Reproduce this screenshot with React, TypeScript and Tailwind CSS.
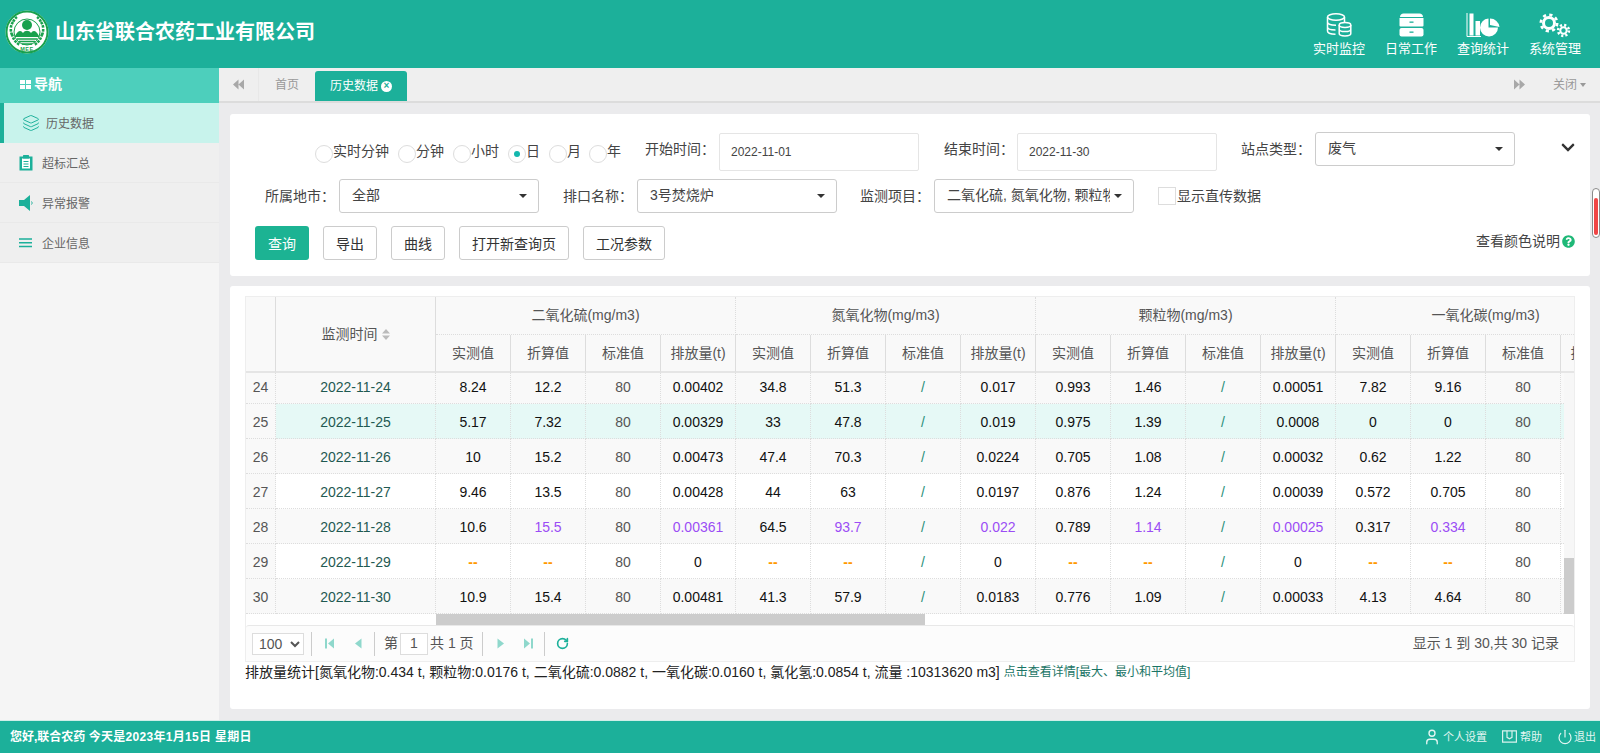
import React from "react";
import { Layers, User, Power, RotateCw } from "lucide-react";
import { FaChevronDown, FaQuestionCircle } from "react-icons/fa";

const rows: string[][] = [
  ["24","2022-11-24","8.24","12.2","80","0.00402","34.8","51.3","/","0.017","0.993","1.46","/","0.00051","7.82","9.16","80",""],
  ["25","2022-11-25","5.17","7.32","80","0.00329","33","47.8","/","0.019","0.975","1.39","/","0.0008","0","0","80",""],
  ["26","2022-11-26","10","15.2","80","0.00473","47.4","70.3","/","0.0224","0.705","1.08","/","0.00032","0.62","1.22","80",""],
  ["27","2022-11-27","9.46","13.5","80","0.00428","44","63","/","0.0197","0.876","1.24","/","0.00039","0.572","0.705","80",""],
  ["28","2022-11-28","10.6","p15.5","80","p0.00361","64.5","p93.7","/","p0.022","0.789","p1.14","/","p0.00025","0.317","p0.334","80",""],
  ["29","2022-11-29","--","--","80","0","--","--","/","0","--","--","/","0","--","--","80",""],
  ["30","2022-11-30","10.9","15.4","80","0.00481","41.3","57.9","/","0.0183","0.776","1.09","/","0.00033","4.13","4.64","80",""],
];
const groups = ["二氧化硫(mg/m3)", "氮氧化物(mg/m3)", "颗粒物(mg/m3)", "一氧化碳(mg/m3)"];
const subs = ["实测值", "折算值", "标准值", "排放量(t)"];

function Cols() {
  return (
    <colgroup>
      <col className="w-[30px]" />
      <col className="w-[160px]" />
      {Array.from({ length: 16 }).map((_, i) => (
        <col key={i} className="w-[75px]" />
      ))}
    </colgroup>
  );
}

function cellClass(v: string) {
  if (v.startsWith("p")) return "text-[#9b4df5]";
  if (v === "--") return "font-bold text-[#ff9900]";
  if (v === "/") return "text-[#2a8f7a]";
  if (v === "80") return "text-[#555]";
  return "text-[#111]";
}

function DoubleArrow({ right }: { right?: boolean }) {
  return (
    <svg width="11" height="11" viewBox="0 0 11 11" className={right ? "rotate-180" : ""}>
      <path d="M5.500 0.500v10L0 5.500zM11 0.500v10L5.500 5.500z" fill="#a8a8a8" />
    </svg>
  );
}

function Radio({ label, w, checked }: { label: string; w: string; checked?: boolean }) {
  return (
    <div className={`flex items-center ${w} shrink-0`}>
      <span className="mt-[3px] flex h-[18px] w-[18px] shrink-0 items-center justify-center rounded-full border border-[#ddd] bg-white">
        {checked && <span className="h-[6px] w-[6px] rounded-full bg-[#14b8ae]" />}
      </span>
      <span className="-mt-[2px] text-[14px] leading-[20px] text-[#444]">{label}</span>
    </div>
  );
}

function Select({ text, w = "w-[200px]" }: { text: string; w?: string }) {
  return (
    <div className={`flex h-[34px] ${w} shrink-0 items-center rounded-[3px] border border-[#ccc] bg-white pl-[12px] pr-[11px]`}>
      <span className="-mt-[2px] flex-1 overflow-hidden whitespace-nowrap text-[14px] text-[#444]">{text}</span>
      <span className="ml-[4px] h-0 w-0 shrink-0 border-x-[4px] border-t-[4px] border-x-transparent border-t-[#333]" />
    </div>
  );
}

function Label({ text, w }: { text: string; w: string }) {
  return <span className={`${w} shrink-0 whitespace-nowrap text-[14px] text-[#444]`}>{text}</span>;
}

function DateInput({ value }: { value: string }) {
  return (
    <input
      readOnly
      value={value}
      className="h-[38px] w-[200px] shrink-0 rounded-[2px] border border-[#e5e5e5] bg-white pl-[11px] text-[12px] text-[#444] outline-none"
    />
  );
}

function Btn({ text, w }: { text: string; w: string }) {
  return (
    <button className={`h-[34px] ${w} shrink-0 rounded-[3px] border border-[#ccc] bg-white pt-[2px] text-[14px] text-[#333]`}>
      {text}
    </button>
  );
}

function Logo() {
  return (
    <svg width="44" height="44" viewBox="0 0 44 44" className="shrink-0">
      <circle cx="22" cy="22" r="21.500" fill="#fff" />
      <circle cx="22" cy="22" r="20.500" fill="none" stroke="#19a14d" strokeWidth="2" />
      <circle cx="22" cy="22" r="13" fill="#fff" stroke="#19a14d" strokeWidth="1" />
      <path
        d="M7 24c1 5 4 9 8 11M5.800 19c0 3 .6 5 1.800 7M37 24c-1 5-4 9-8 11M38.200 19c0 3-.6 5-1.800 7M8 12c-1.500 2-2 4-2.200 6M36 12c1.500 2 2 4 2.200 6M12 7c-1.500 1-3 3-4 5M32 7c1.500 1 3 3 4 5"
        fill="none"
        stroke="#19a14d"
        strokeWidth="2.600"
        strokeDasharray="2.500 1"
      />
      <circle cx="22" cy="15" r="5" fill="#19a14d" />
      <path d="M10 26c3-6 6-6 8-3 2-3 6-3 8 0 2-3 5-3 8 3v1H10z" fill="#19a14d" />
      <path d="M12 29h20M14 31.500h16M17 34h10" stroke="#19a14d" strokeWidth="1.300" />
      <text x="22" y="41" textAnchor="middle" fontSize="5.500" fontWeight="700" fill="#19a14d" letterSpacing="0.500">
        MEE
      </text>
    </svg>
  );
}

function DbIcon() {
  return (
    <svg width="26" height="24" viewBox="0 0 26 24" fill="none" stroke="#fff" strokeWidth="1.500">
      <ellipse cx="10" cy="4" rx="8.500" ry="3.200" />
      <path d="M1.500 4v14c0 2 3.500 3.200 8 3.200M18.500 4v5M1.500 9c0 2 3.500 3.200 8.500 3.200M1.500 14c0 2 3.500 3 8 3" />
      <ellipse cx="19" cy="12" rx="5.800" ry="2.400" />
      <path d="M13.200 12v8.500c0 1.400 2.600 2.400 5.800 2.400s5.800-1 5.800-2.400V12M13.200 16.200c0 1.400 2.600 2.400 5.800 2.400s5.800-1 5.800-2.400" />
    </svg>
  );
}

function DrawerIcon() {
  return (
    <svg width="25" height="24" viewBox="0 0 25 24">
      <path d="M4.500 0.500h16c2 0 3.500 1.500 3.500 3.500H1c0-2 1.500-3.500 3.500-3.500z" fill="#fff" />
      <path d="M0.500 5h24v7.500a1 1 0 0 1-1 1h-22a1 1 0 0 1-1-1z" fill="#fff" />
      <rect x="0.500" y="15" width="24" height="8.500" rx="2" fill="#fff" />
      <rect x="10.500" y="8.500" width="4" height="1.300" fill="#1cb09a" />
      <rect x="10.500" y="18.500" width="4" height="1.300" fill="#1cb09a" />
    </svg>
  );
}

function ChartIcon() {
  return (
    <svg width="34" height="24" viewBox="0 0 34 24">
      <path d="M1 0v23.500h14" fill="none" stroke="#fff" strokeWidth="1" />
      <rect x="3.500" y="0.500" width="4" height="22" fill="#fff" />
      <rect x="9.500" y="8" width="4.500" height="14.500" fill="#fff" />
      <path d="M24 12V5.500a9.500 9.500 0 0 1 9.500 8.500z" fill="#fff" />
      <path d="M23 7a9 9 0 1 0 9.500 9H23z" fill="#fff" transform="translate(-0.500 -1.500)" />
    </svg>
  );
}

function Gear({ cx, cy, r, w }: { cx: number; cy: number; r: number; w: number }) {
  const outer = r + w / 2 + 1.200;
  const c = 2 * Math.PI * outer;
  return (
    <g fill="none" stroke="#fff">
      <circle cx={cx} cy={cy} r={r} strokeWidth={w} />
      <circle cx={cx} cy={cy} r={outer} strokeWidth={2.600} strokeDasharray={`${c / 16} ${c / 16}`} />
    </g>
  );
}

function GearsIcon() {
  return (
    <svg width="32" height="25" viewBox="0 0 32 25">
      <Gear cx={10} cy={10} r={5.500} w={3} />
      <Gear cx={24.500} cy={17.500} r={3.200} w={2} />
    </svg>
  );
}

function ClipIcon() {
  return (
    <svg width="14" height="16" viewBox="0 0 14 16">
      <rect x="0.500" y="1.500" width="13" height="14" fill="#1cb09a" />
      <rect x="3" y="3.500" width="8" height="10" fill="#fff" />
      <rect x="4" y="0" width="6" height="3.500" rx="0.500" fill="#1cb09a" />
      <path d="M4.500 6.500h5M4.500 9h5M4.500 11.500h5" stroke="#1cb09a" strokeWidth="1" />
    </svg>
  );
}

function SpeakerIcon() {
  return (
    <svg width="15" height="16" viewBox="0 0 15 16">
      <path d="M0 5h5l6-5v16l-6-5H0z" fill="#1cb09a" />
      <path d="M12.500 6.500c.8.800.8 2.200 0 3" fill="none" stroke="#1cb09a" strokeWidth="1" />
    </svg>
  );
}

function MenuIcon() {
  return (
    <svg width="13" height="10" viewBox="0 0 13 10">
      <path d="M0 1h13M0 4.800h13M0 8.600h13" stroke="#1cb09a" strokeWidth="1.500" />
    </svg>
  );
}

function BookIcon() {
  return (
    <svg width="15" height="14" viewBox="0 0 15 14" fill="none" stroke="#d7f2ed" strokeWidth="1.200" className="shrink-0">
      <path d="M0.600 0.800h13.800v11.400H0.600z" />
      <path d="M5 0.800v6.500l2.500 1.500 2.500-1.500V0.800" />
    </svg>
  );
}

function PageArrow({ dir, bar, cls }: { dir: "l" | "r"; bar?: boolean; cls: string }) {
  return (
    <svg width="9" height="11" viewBox="0 0 9 11" className={`shrink-0 ${cls} ${dir === "r" ? "rotate-180" : ""}`}>
      {bar && <rect x="0" y="0.500" width="2" height="10" fill="#8fd8cc" />}
      <path d={bar ? "M9 0.500v10L3 5.500z" : "M7.500 0.500v10L1 5.500z"} fill="#8fd8cc" />
    </svg>
  );
}

function Sep({ cls }: { cls: string }) {
  return <div className={`h-[24px] w-px shrink-0 bg-[#ccc] ${cls}`} />;
}

function TopItem({ icon, text }: { icon: React.ReactNode; text: string }) {
  return (
    <div className="flex w-[72px] flex-col items-center pt-[13px]">
      <div className="flex h-[24px] items-center justify-center">{icon}</div>
      <span className="mt-[2px] text-[13px] leading-[20px] text-white">{text}</span>
    </div>
  );
}

function SideItem({ icon, text }: { icon: React.ReactNode; text: string }) {
  return (
    <div className="flex h-[40px] items-center border-b border-[#e9e9e9] bg-[#efefef] pl-[19px]">
      <span className="flex w-[23px] items-center">{icon}</span>
      <span className="pt-[2px] text-[12px] text-[#666]">{text}</span>
    </div>
  );
}

export default function App() {
  return (
    <div className="flex h-[753px] w-[1600px] flex-col overflow-hidden bg-[#ebebed] [font-family:'Liberation_Sans','Noto_Sans_CJK_SC',sans-serif]">
      <header className="flex h-[68px] shrink-0 bg-[#1cb09a]">
        <div className="flex items-center pb-[4px] pl-[5px]">
          <Logo />
          <span className="ml-[6px] text-[20px] font-bold text-white">山东省联合农药工业有限公司</span>
        </div>
        <div className="ml-auto flex pr-[9px]">
          <TopItem icon={<DbIcon />} text="实时监控" />
          <TopItem icon={<DrawerIcon />} text="日常工作" />
          <TopItem icon={<ChartIcon />} text="查询统计" />
          <TopItem icon={<GearsIcon />} text="系统管理" />
        </div>
      </header>

      <div className="flex min-h-0 flex-1">
        <aside className="w-[219px] shrink-0 bg-[#f5f5f5]">
          <div className="flex h-[35px] items-center bg-[#4dcfbc] pb-[2px] pl-[20px] text-[14px] font-bold text-white">
            <span className="mr-[3px] grid grid-cols-2 gap-[1px]">
              <span className="h-[4px] w-[5px] bg-white" />
              <span className="h-[4px] w-[5px] bg-white" />
              <span className="h-[4px] w-[5px] bg-white" />
              <span className="h-[4px] w-[5px] bg-white" />
            </span>
            导航
          </div>
          <div className="flex h-[40px] items-center border-l-4 border-[#1cb09a] bg-[#c8f3ec] pl-[18px]">
            <Layers size={18} strokeWidth={1.300} className="mr-[6px] text-[#1cb09a]" />
            <span className="pt-[2px] text-[12px] text-[#666]">历史数据</span>
          </div>
          <SideItem icon={<ClipIcon />} text="超标汇总" />
          <SideItem icon={<SpeakerIcon />} text="异常报警" />
          <SideItem icon={<MenuIcon />} text="企业信息" />
        </aside>

        <main className="flex min-w-0 flex-1 flex-col">
          <div className="flex h-[35px] shrink-0 border-b-2 border-[#dcdcdc] bg-[#efefef]">
            <div className="flex w-[40px] items-center justify-center border-r border-[#e8e8e8]">
              <DoubleArrow />
            </div>
            <div className="flex w-[56px] items-center justify-center text-[12px] text-[#999]">首页</div>
            <div className="mt-[3px] flex w-[92px] items-center justify-center gap-[3px] rounded-t-[3px] bg-[#1cb09a] text-[12px] text-white">
              历史数据
              <span className="flex h-[11px] w-[11px] items-center justify-center rounded-full bg-white text-[10px] font-bold leading-none text-[#1cb09a]">
                ×
              </span>
            </div>
            <div className="ml-auto flex items-center pr-[14px]">
              <DoubleArrow right />
              <span className="ml-[28px] text-[12px] text-[#999]">关闭</span>
              <span className="ml-[3px] h-0 w-0 border-x-[3.500px] border-t-[4px] border-x-transparent border-t-[#999]" />
            </div>
          </div>

          <div className="flex min-h-0 flex-1">
            <div className="min-w-0 flex-1 pl-[11px] pt-[11px]">
              <section className="h-[162px] rounded-[3px] bg-white pr-[15px] pt-[19px]">
                <div className="ml-[85px] flex h-[38px] items-center">
                  <Radio label="实时分钟" w="w-[83px]" />
                  <Radio label="分钟" w="w-[55px]" />
                  <Radio label="小时" w="w-[55px]" />
                  <Radio label="日" w="w-[41px]" checked />
                  <Radio label="月" w="w-[40px]" />
                  <Radio label="年" w="w-[56px]" />
                  <Label text="开始时间：" w="-mt-[5px] w-[74px]" />
                  <DateInput value="2022-11-01" />
                  <Label text="结束时间：" w="-mt-[5px] ml-[25px] w-[73px]" />
                  <DateInput value="2022-11-30" />
                  <Label text="站点类型：" w="-mt-[5px] ml-[24px] w-[74px]" />
                  <div className="-mt-[6px]">
                    <Select text="废气" />
                  </div>
                  <FaChevronDown size={15} className="-mt-[10px] ml-[46px] text-[#333]" />
                </div>
                <div className="mt-[8px] flex h-[34px] items-center pl-[35px]">
                  <Label text="所属地市：" w="w-[74px]" />
                  <Select text="全部" />
                  <Label text="排口名称：" w="ml-[24px] w-[74px]" />
                  <Select text="3号焚烧炉" />
                  <Label text="监测项目：" w="ml-[23px] w-[74px]" />
                  <Select text="二氧化硫, 氮氧化物, 颗粒物, 一氧化碳" />
                  <span className="ml-[24px] h-[18px] w-[18px] shrink-0 border border-[#ddd] bg-white" />
                  <span className="ml-[1px] text-[14px] text-[#444]">显示直传数据</span>
                </div>
                <div className="mt-[13px] flex h-[34px] items-center gap-[14px] pl-[25px]">
                  <button className="h-[34px] w-[54px] rounded-[3px] bg-[#1cb393] pt-[2px] text-[14px] text-white">查询</button>
                  <Btn text="导出" w="w-[54px]" />
                  <Btn text="曲线" w="w-[54px]" />
                  <Btn text="打开新查询页" w="w-[110px]" />
                  <Btn text="工况参数" w="w-[82px]" />
                  <div className="ml-auto flex items-center gap-[2px] pb-[4px] text-[14px] text-[#444]">
                    查看颜色说明
                    <FaQuestionCircle size={13} className="text-[#1fb877]" />
                  </div>
                </div>
              </section>

              <section className="mt-[10px] h-[423px] rounded-[3px] bg-white px-[15px] pt-[10px]">
                <div className="border-x border-t border-[#eee] bg-white">
                  <div className="h-[76px] overflow-hidden">
                    <table className="w-[1390px] table-fixed border-separate border-spacing-0 text-[14px] text-[#555]">
                      <Cols />
                      <thead>
                        <tr className="h-[38px]">
                          <th rowSpan={2} className="border-b-2 border-r border-b-[#e5e5e5] border-r-[#ddd] border-r-dotted bg-[#f9f9f9] p-0" />
                          <th rowSpan={2} className="border-b-2 border-r border-b-[#e5e5e5] border-r-[#ddd] border-r-dotted bg-[#f9f9f9] p-0 font-normal">
                            <span className="inline-flex items-center gap-[4px]">
                              监测时间
                              <svg width="8" height="11" viewBox="0 0 8 11">
                                <path d="M4 0l4 4.500H0zM4 11L0 6.500h8z" fill="#bbb" />
                              </svg>
                            </span>
                          </th>
                          {groups.map((g) => (
                            <th key={g} colSpan={4} className="border-b border-r border-dotted border-[#ddd] bg-[#f9f9f9] p-0 font-normal">
                              {g}
                            </th>
                          ))}
                        </tr>
                        <tr className="h-[38px]">
                          {Array.from({ length: 16 }).map((_, i) => (
                            <th key={i} className="border-b-2 border-r border-b-[#e5e5e5] border-r-[#ddd] border-r-dotted bg-[#f9f9f9] p-0 font-normal">
                              {subs[i % 4]}
                            </th>
                          ))}
                        </tr>
                      </thead>
                    </table>
                  </div>

                  <div className="flex h-[241px]">
                    <div className="min-w-0 flex-1 overflow-hidden">
                      <table className="-mt-[4px] w-[1390px] table-fixed border-separate border-spacing-0 text-center text-[14px]">
                        <Cols />
                        <tbody>
                          {rows.map((r) => {
                            const stripe = r[0] === "25" ? "bg-[#e6f9f6]" : Number(r[0]) % 2 === 0 ? "bg-[#f9f9f9]" : "bg-white";
                            return (
                              <tr key={r[0]} className="h-[35px]">
                                {r.map((v, i) => (
                                  <td
                                    key={i}
                                    className={`border-b border-r border-dotted border-[#ddd] p-0 pt-[2px] ${
                                      i === 0
                                        ? "bg-[#f9f9f9] text-[#555]"
                                        : i === 1
                                          ? `${stripe} text-[#1f5a52]`
                                          : `${stripe} ${cellClass(v)}`
                                    }`}
                                  >
                                    {v.startsWith("p") ? v.slice(1) : v}
                                  </td>
                                ))}
                              </tr>
                            );
                          })}
                        </tbody>
                      </table>
                    </div>
                    <div className="flex w-[10px] shrink-0 flex-col bg-[#f7f7f7]">
                      <div className="flex-1" />
                      <div className="h-[56px] bg-[#ccc]" />
                    </div>
                  </div>

                  <div className="h-[11px] bg-white">
                    <div className="ml-[190px] h-full w-[489px] bg-[#ccc]" />
                  </div>

                  <div className="flex h-[37px] items-center rounded-t-[3px] border-y border-t-[#e8e8e8] border-b-[#eee] bg-[#fcfcfc] pl-[6px] pr-[15px] text-[14px] text-[#555]">
                    <select className="h-[22px] w-[52px] shrink-0 border border-[#ddd] bg-white pl-[2px] text-[14px] text-[#555] outline-none">
                      <option>100</option>
                    </select>
                    <Sep cls="ml-[7px]" />
                    <PageArrow dir="l" bar cls="ml-[13px]" />
                    <PageArrow dir="l" cls="ml-[20px]" />
                    <Sep cls="ml-[11px]" />
                    <span className="ml-[9px]">第</span>
                    <span className="mx-[2px] flex h-[22px] w-[28px] items-center justify-center border border-[#ddd] bg-white">1</span>
                    <span>共 1 页</span>
                    <Sep cls="ml-[8px]" />
                    <PageArrow dir="r" cls="ml-[13px]" />
                    <PageArrow dir="r" bar cls="ml-[19px]" />
                    <Sep cls="ml-[11px]" />
                    <RotateCw size={13} strokeWidth={3} className="ml-[11px] text-[#1cb09a]" />
                    <span className="ml-auto">显示 1 到 30,共 30 记录</span>
                  </div>
                </div>

                <div className="flex h-[20px] items-center whitespace-nowrap text-[14px] text-[#222]">
                  排放量统计[氮氧化物:0.434 t, 颗粒物:0.0176 t, 二氧化硫:0.0882 t, 一氧化碳:0.0160 t, 氯化氢:0.0854 t, 流量 :10313620 m3]
                  <span className="ml-[4px] text-[12px] text-[#1a7565]">点击查看详情[最大、最小和平均值]</span>
                </div>
              </section>
            </div>

            <div className="w-[10px] shrink-0 pl-[2px] pt-[85px]">
              <div className="flex h-[50px] w-[8px] items-center justify-center rounded-full border border-[#8a8a8a] bg-white">
                <div className="mt-[6px] h-[37px] w-[4px] rounded-full bg-[#f04545]" />
              </div>
            </div>
          </div>
        </main>
      </div>

      <footer className="flex h-[33px] shrink-0 items-center border-t border-[#cfeee8] bg-[#1cb09a] pl-[10px] pr-[4px] text-[12px]">
        <span className="font-bold text-white">
          您好,联合农药 <span className="tracking-[0.3px]">今天是2023年1月15日 星期日</span>
        </span>
        <div className="ml-auto flex items-center text-[11px] text-[#e3f6f2]">
          <User size={18} strokeWidth={1.800} />
          <span className="ml-[2px]">个人设置</span>
          <span className="ml-[15px] flex"><BookIcon /></span>
          <span className="ml-[3px]">帮助</span>
          <Power size={16} strokeWidth={1.800} className="ml-[15px]" />
          <span className="ml-[1px]">退出</span>
        </div>
      </footer>
    </div>
  );
}
